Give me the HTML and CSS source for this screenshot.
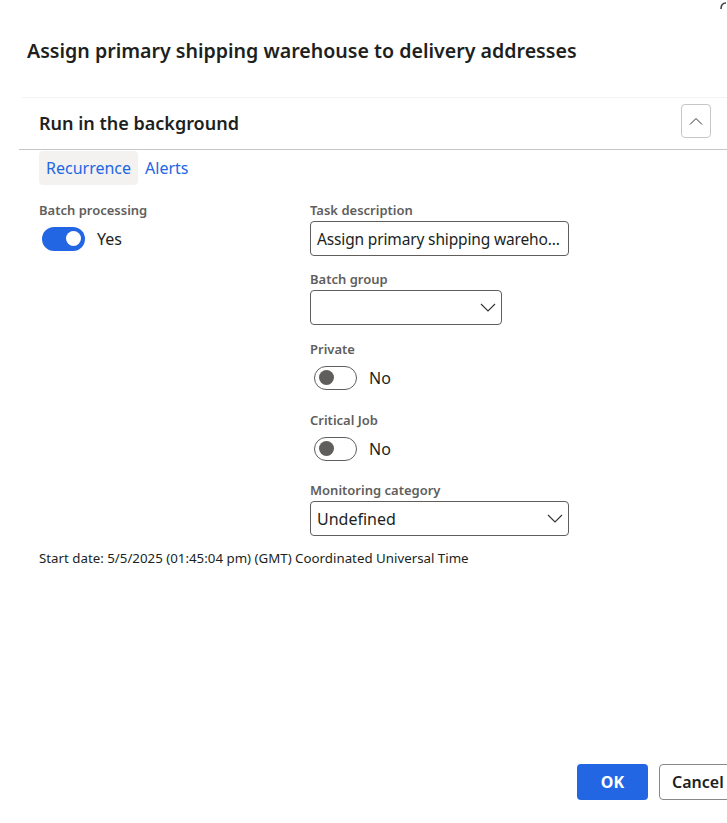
FILE: index.html
```html
<!DOCTYPE html>
<html lang="en">
<head>
<meta charset="utf-8">
<title>Assign primary shipping warehouse</title>
<link rel="stylesheet" href="styles.css">
</head>
<body>
<div class="dialog">
  <svg class="corner-icon" width="8" height="12" viewBox="0 0 8 12"><path d="M2 9 C2 5 4 3 7 3" fill="none" stroke="#444" stroke-width="1.6"/></svg>
  <h1 class="title">Assign primary shipping warehouse to delivery addresses</h1>

  <section class="section">
    <div class="section-divider"></div>
    <div class="section-header">
      <h2 class="section-title">Run in the background</h2>
      <button class="collapse-btn" aria-label="Collapse">
        <svg width="14" height="8" viewBox="0 0 14 8"><path d="M1 7.5 L7 1.5 L13 7.5" fill="none" stroke="#323130" stroke-width="1"/></svg>
      </button>
    </div>

    <div class="tabs">
      <span class="tab tab-active">Recurrence</span>
      <span class="tab">Alerts</span>
    </div>

    <div class="form">
      <div class="col col-left">
        <div class="field">
          <div class="label">Batch processing</div>
          <div class="toggle-row">
            <span class="toggle toggle-on"><span class="knob"></span></span>
            <span class="toggle-text">Yes</span>
          </div>
        </div>
      </div>
      <div class="col col-right">
        <div class="field">
          <div class="label">Task description</div>
          <div class="input input-wide"><span class="input-text desc">Assign primary shipping wareho...</span></div>
        </div>
        <div class="field">
          <div class="label">Batch group</div>
          <div class="input input-narrow select">
            <span class="input-text"></span>
            <svg class="chev" width="16" height="9" viewBox="0 0 16 9"><path d="M1 1 L8 8 L15 1" fill="none" stroke="#323130" stroke-width="1.1"/></svg>
          </div>
        </div>
        <div class="field field-toggle">
          <div class="label">Private</div>
          <div class="toggle-row">
            <span class="toggle toggle-off"><span class="knob"></span></span>
            <span class="toggle-text">No</span>
          </div>
        </div>
        <div class="field field-toggle">
          <div class="label">Critical Job</div>
          <div class="toggle-row">
            <span class="toggle toggle-off"><span class="knob"></span></span>
            <span class="toggle-text">No</span>
          </div>
        </div>
        <div class="field">
          <div class="label">Monitoring category</div>
          <div class="input input-wide select">
            <span class="input-text">Undefined</span>
            <svg class="chev" width="16" height="9" viewBox="0 0 16 9"><path d="M1 1 L8 8 L15 1" fill="none" stroke="#323130" stroke-width="1.1"/></svg>
          </div>
        </div>
      </div>
    </div>

    <p class="start-date">Start date: 5/5/2025 (01:45:04 pm) (GMT) Coordinated Universal Time</p>
  </section>

  <div class="footer">
    <button class="btn btn-primary">OK</button>
    <button class="btn btn-default">Cancel</button>
  </div>
</div>
</body>
</html>
```

FILE: styles.css
```css
* { box-sizing: border-box; }
html, body { margin: 0; padding: 0; }
body {
  width: 727px;
  height: 823px;
  overflow: hidden;
  background: #ffffff;
  font-family: "Segoe UI", "Noto Sans", "Open Sans", sans-serif;
  color: #201f1e;
}
.dialog {
  position: relative;
  width: 727px;
  height: 823px;
  display: flex;
  flex-direction: column;
}
.corner-icon {
  position: absolute;
  top: 0;
  right: 0;
}
.title {
  margin: 0;
  padding: 37px 0 0 27px;
  font-size: 19.6px;
  line-height: 28px;
  font-weight: 600;
  color: #201f1e;
  white-space: nowrap;
}
.section {
  margin: 32px 0 0 19px;
}
.section-divider {
  height: 1px;
  margin-left: 3px;
  background: #f3f2f1;
}
.section-header {
  display: flex;
  align-items: flex-start;
  justify-content: space-between;
  height: 52px;
  border-bottom: 1px solid #c8c6c4;
  padding: 6px 16px 0 20px;
}
.section-title {
  margin: 7px 0 0 0;
  font-size: 18px;
  line-height: 24px;
  font-weight: 600;
  color: #201f1e;
}
.collapse-btn {
  width: 30px;
  height: 34px;
  padding: 0;
  background: #ffffff;
  border: 1px solid #c8c6c4;
  border-radius: 4px;
  display: flex;
  align-items: center;
  justify-content: center;
}
.tabs {
  display: flex;
  gap: 7px;
  padding-left: 20px;
  margin-top: 1px;
}
.tab {
  height: 34px;
  line-height: 34px;
  padding: 0 7px;
  font-size: 16px;
  color: #2266e3;
  border-radius: 4px;
}
.tab + .tab { padding-left: 0; }
.tab-active {
  background: #f3f2f1;
}
.form {
  display: flex;
  margin-top: 15px;
  padding-left: 20px;
}
.col-left { width: 271px; }
.col-right {
  display: flex;
  flex-direction: column;
  gap: 13px;
}
.field {
  display: flex;
  flex-direction: column;
  gap: 1px;
}
.field-toggle { gap: 0; padding-top: 1px; }
.label {
  font-size: 13px;
  line-height: 20px;
  font-weight: 600;
  color: #605e5c;
}
.input {
  height: 35px;
  border: 1px solid #605e5c;
  border-radius: 4px;
  display: flex;
  align-items: center;
  padding: 0 5px 0 6px;
}
.input-wide { width: 259px; }
.input-narrow { width: 192px; }
.input-text {
  flex: 1;
  font-size: 16px;
  color: #201f1e;
  white-space: nowrap;
  overflow: hidden;
}
.input-text.desc {
  font-size: 15.5px;
  letter-spacing: -0.15px;
  overflow: visible;
}
.toggle-row {
  display: flex;
  align-items: center;
  height: 35px;
  padding-left: 3px;
  gap: 12px;
}
.field-toggle .toggle-row { height: 37px; padding-left: 4px; }
.toggle {
  width: 43px;
  height: 24px;
  border-radius: 12px;
  display: flex;
  align-items: center;
  padding: 0 4px;
}
.toggle-on {
  background: #2266e3;
  justify-content: flex-end;
}
.toggle-off {
  border: 1px solid #605e5c;
  background: #ffffff;
  justify-content: flex-start;
}
.knob {
  width: 15px;
  height: 15px;
  border-radius: 50%;
}
.toggle-on .knob { background: #ffffff; }
.toggle-off .knob { background: #605e5c; }
.toggle-text {
  font-size: 16px;
  color: #201f1e;
}
.start-date {
  margin: 12px 0 0 20px;
  font-size: 13.3px;
  line-height: 20px;
  color: #201f1e;
}
.footer {
  margin-top: auto;
  display: flex;
  justify-content: flex-end;
  gap: 11px;
  margin-right: -36px;
  padding-bottom: 23px;
}
.btn {
  height: 36px;
  border-radius: 4px;
  font-family: inherit;
  font-size: 16px;
  font-weight: 600;
}
.btn-primary {
  width: 71px;
  background: #2266e3;
  color: #ffffff;
  border: none;
  font-weight: 700;
}
.btn-default {
  width: 104px;
  background: #ffffff;
  color: #201f1e;
  border: 1px solid #8a8886;
  text-align: left;
  padding-left: 12px;
}
```
